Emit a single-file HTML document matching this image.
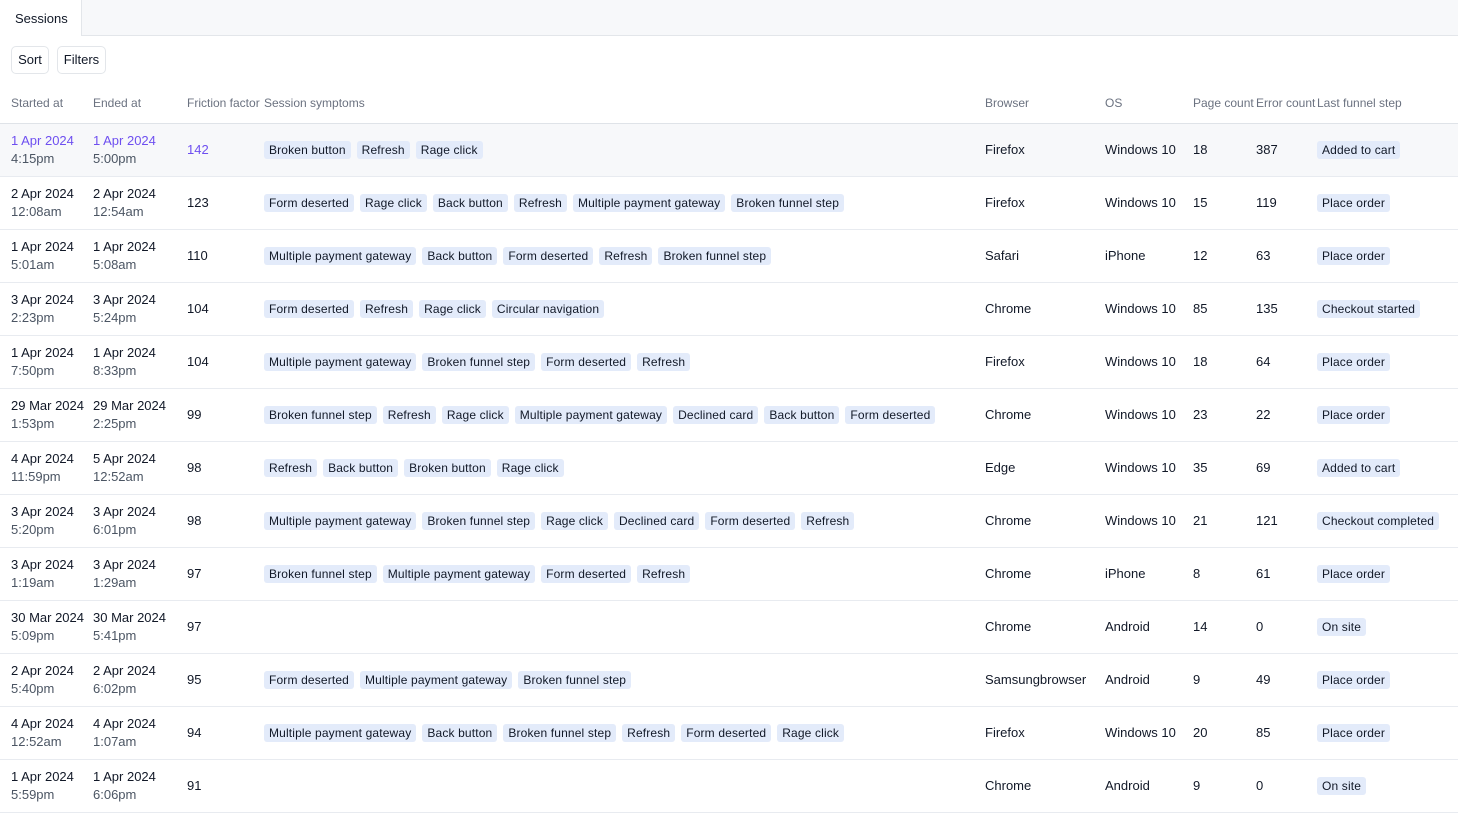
<!DOCTYPE html>
<html><head><meta charset="utf-8"><style>
*{box-sizing:border-box;margin:0;padding:0}
body{width:1458px;height:810px;overflow:hidden;background:#fff;font-family:"Liberation Sans",sans-serif;color:#111827;position:relative}
.tabbar{position:absolute;left:0;top:0;width:1458px;height:36px;background:#f7f8fa;border-bottom:1px solid #e3e6ea}
.tab{position:absolute;left:0;top:0;width:82px;height:36px;background:#fff;border-right:1px solid #e3e6ea;font-size:13px;line-height:37px;padding-left:15px}
.btn{position:absolute;top:46px;height:28px;border:1px solid #e3e6ea;border-radius:5px;font-size:13px;line-height:26px;text-align:center}
.hd{position:absolute;top:96px;font-size:12px;color:#6b7280;white-space:nowrap}
.hline{position:absolute;left:0;top:123px;width:1458px;height:1px;background:#dfe3e8}
.row{position:absolute;left:0;width:1458px;height:53px;border-bottom:1px solid #e8ebf0}
.c{position:absolute;font-size:13px;white-space:nowrap;top:18px}
.d{position:absolute;font-size:13px;white-space:nowrap;top:8px;line-height:18px}
.d span{color:#4b5563;display:block}
.tags{position:absolute;left:264px;top:17px;display:flex;gap:6px}
.t{background:#e3ebfa;border-radius:3px;font-size:12px;letter-spacing:0.15px;height:18px;line-height:19px;padding:0 5px;white-space:nowrap}
.hl .d,.hl .c.ff{color:#6e4ff0}
.hl .d span{color:#4b5563}
</style></head><body>
<div class="tabbar"></div><div class="tab">Sessions</div>
<div class="btn" style="left:11px;width:38px">Sort</div>
<div class="btn" style="left:57px;width:49px">Filters</div>
<div class="hd" style="left:11px">Started at</div>
<div class="hd" style="left:93px">Ended at</div>
<div class="hd" style="left:187px">Friction factor</div>
<div class="hd" style="left:264px">Session symptoms</div>
<div class="hd" style="left:985px">Browser</div>
<div class="hd" style="left:1105px">OS</div>
<div class="hd" style="left:1193px">Page count</div>
<div class="hd" style="left:1256px">Error count</div>
<div class="hd" style="left:1317px">Last funnel step</div>
<div class="hline"></div>
<div id="rows"></div>
<script>
const R=[
["1 Apr 2024","4:15pm","1 Apr 2024","5:00pm","142",["Broken button","Refresh","Rage click"],"Firefox","Windows 10","18","387","Added to cart"],
["2 Apr 2024","12:08am","2 Apr 2024","12:54am","123",["Form deserted","Rage click","Back button","Refresh","Multiple payment gateway","Broken funnel step"],"Firefox","Windows 10","15","119","Place order"],
["1 Apr 2024","5:01am","1 Apr 2024","5:08am","110",["Multiple payment gateway","Back button","Form deserted","Refresh","Broken funnel step"],"Safari","iPhone","12","63","Place order"],
["3 Apr 2024","2:23pm","3 Apr 2024","5:24pm","104",["Form deserted","Refresh","Rage click","Circular navigation"],"Chrome","Windows 10","85","135","Checkout started"],
["1 Apr 2024","7:50pm","1 Apr 2024","8:33pm","104",["Multiple payment gateway","Broken funnel step","Form deserted","Refresh"],"Firefox","Windows 10","18","64","Place order"],
["29 Mar 2024","1:53pm","29 Mar 2024","2:25pm","99",["Broken funnel step","Refresh","Rage click","Multiple payment gateway","Declined card","Back button","Form deserted"],"Chrome","Windows 10","23","22","Place order"],
["4 Apr 2024","11:59pm","5 Apr 2024","12:52am","98",["Refresh","Back button","Broken button","Rage click"],"Edge","Windows 10","35","69","Added to cart"],
["3 Apr 2024","5:20pm","3 Apr 2024","6:01pm","98",["Multiple payment gateway","Broken funnel step","Rage click","Declined card","Form deserted","Refresh"],"Chrome","Windows 10","21","121","Checkout completed"],
["3 Apr 2024","1:19am","3 Apr 2024","1:29am","97",["Broken funnel step","Multiple payment gateway","Form deserted","Refresh"],"Chrome","iPhone","8","61","Place order"],
["30 Mar 2024","5:09pm","30 Mar 2024","5:41pm","97",[],"Chrome","Android","14","0","On site"],
["2 Apr 2024","5:40pm","2 Apr 2024","6:02pm","95",["Form deserted","Multiple payment gateway","Broken funnel step"],"Samsungbrowser","Android","9","49","Place order"],
["4 Apr 2024","12:52am","4 Apr 2024","1:07am","94",["Multiple payment gateway","Back button","Broken funnel step","Refresh","Form deserted","Rage click"],"Firefox","Windows 10","20","85","Place order"],
["1 Apr 2024","5:59pm","1 Apr 2024","6:06pm","91",[],"Chrome","Android","9","0","On site"]];
let h="";
R.forEach((r,i)=>{
h+=`<div class="row${i==0?' hl':''}" style="top:${124+i*53}px;${i==0?'background:#f7f8fa':''}">
<div class="d" style="left:11px">${r[0]}<span>${r[1]}</span></div>
<div class="d" style="left:93px">${r[2]}<span>${r[3]}</span></div>
<div class="c ff" style="left:187px">${r[4]}</div>
<div class="tags">${r[5].map(t=>`<div class="t">${t}</div>`).join("")}</div>
<div class="c" style="left:985px">${r[6]}</div>
<div class="c" style="left:1105px">${r[7]}</div>
<div class="c" style="left:1193px">${r[8]}</div>
<div class="c" style="left:1256px">${r[9]}</div>
<div class="tags" style="left:1317px"><div class="t">${r[10]}</div></div></div>`;});
document.getElementById("rows").innerHTML=h;
</script>
</body></html>
